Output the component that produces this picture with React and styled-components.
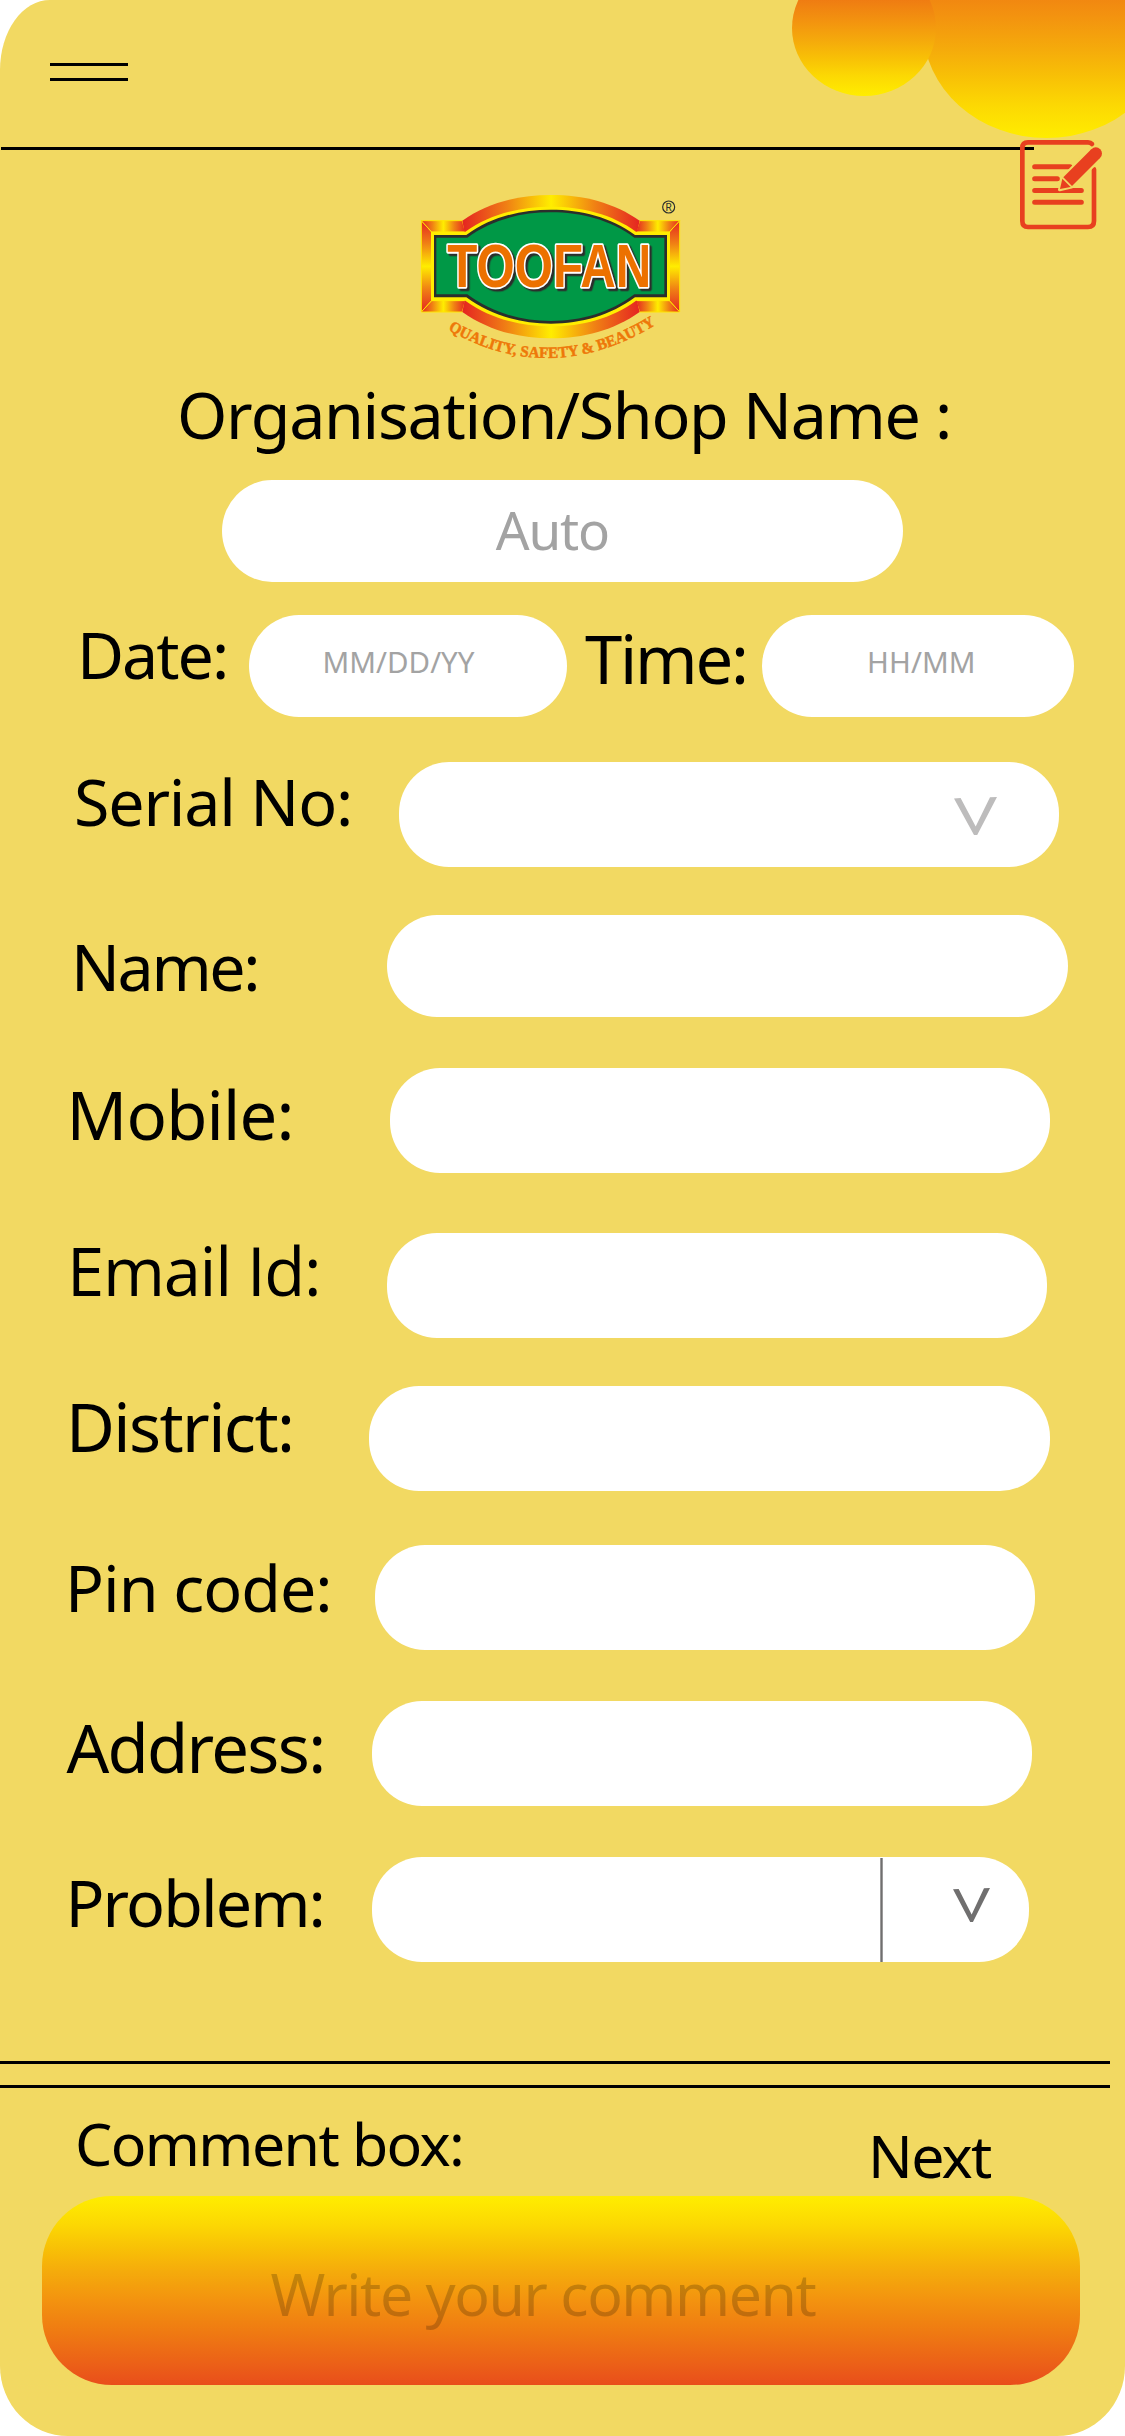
import React from "react";
import styled, { createGlobalStyle } from "styled-components";

const GlobalStyle = createGlobalStyle`
  body {
    margin: 0;
    background: #fff;
    font-family: "Noto Sans", "Open Sans", sans-serif;
    color: #000;
  }
`;

const ASCENT = 0.888;

const Screen = styled.main`
  position: relative;
  display: flex;
  flex-direction: column;
  width: 1125px;
  height: 2436px;
  overflow: hidden;
  background: #f2d962;
  border-radius: 50px 0 68px 68px / 70px 0 70px 70px;
`;

const Header = styled.header`
  display: flex;
  flex-direction: column;
  justify-content: space-between;
  height: 87px;
  padding: 63px 0 0 1px;
`;

const MenuButton = styled.button`
  display: flex;
  flex-direction: column;
  gap: 12px;
  width: 78px;
  margin: 0 0 0 48.5px;
  padding: 0;
  border: 0;
  background: none;
`;

const Rule = styled.span`
  display: block;
  width: ${(p) => p.$width || "100%"};
  height: 3px;
  background: #000;
`;

const Bubble = styled.div`
  position: absolute;
  top: ${(p) => p.$top}px;
  left: ${(p) => p.$left}px;
  width: ${(p) => p.$width}px;
  height: ${(p) => p.$height}px;
  border-radius: 50%;
  background: linear-gradient(
    to top,
    #ffed00 0%,
    #fcd803 15%,
    #f8c006 28%,
    #f5ab0b 40%,
    #f3930f 55%,
    #ef7a12 72%,
    #ec6317 87%,
    #e94e1b 100%
  );
`;

const NoteIcon = styled.svg`
  position: absolute;
  top: 140px;
  left: 1019.5px;
  width: 84px;
  height: 90px;
`;

const Logo = styled.svg`
  width: 300px;
  height: 200px;
  margin: 30px 0 0 400px;
  overflow: visible;
`;

const BrandName = styled.text`
  font: 700 182px "Liberation Sans", Arial, sans-serif;
  fill: #ec7100;
  stroke: #fff;
  stroke-width: 11px;
  stroke-linejoin: round;
  paint-order: stroke;
  filter: drop-shadow(7px 7px 0 #2b2e2c);
`;

const Label = styled.label`
  font-family: ${(p) => p.$family || "inherit"};
  font-size: ${(p) => p.$size}px;
  line-height: 1;
  letter-spacing: ${(p) => p.$track || 0}px;
  white-space: pre;
  padding-top: ${(p) => p.$base + 0.8 - ASCENT * p.$size}px;
`;

const Title = styled.h1`
  height: 100px;
  margin: 0;
  padding-left: 177px;
  box-sizing: border-box;
  font-size: 64.5px;
  font-weight: 400;
  line-height: 68px;
  letter-spacing: -1.3px;
  white-space: pre;
`;

const Row = styled.div`
  display: grid;
  grid-template-columns: ${(p) => p.$columns};
  align-items: start;
  height: ${(p) => p.$height || 105}px;
  margin-top: ${(p) => p.$gap}px;
  padding-left: ${(p) => p.$left}px;
`;

const Field = styled.div`
  display: flex;
  align-items: flex-start;
  box-sizing: border-box;
  height: ${(p) => p.$height || 105}px;
  padding-left: ${(p) => p.$inset || 0}px;
  border-radius: 50px / 51px;
  background: #fff;
`;

const ShopField = styled(Field)`
  flex: none;
  width: 681px;
  margin: 0 auto;
`;

const Placeholder = styled(Label)`
  color: #a3a3a3;
`;

const Arrow = styled.svg`
  flex: none;
  width: ${(p) => p.$width}px;
  height: ${(p) => p.$height}px;
  margin: ${(p) => p.$top}px 0 0 ${(p) => p.$left}px;
`;

const Separator = styled.span`
  width: 3px;
  height: 104px;
  margin: 1px 0 0 508px;
  background: linear-gradient(to right, #9b9a9a 0 1px, #706f6f 1px 2px, #9b9a9a 2px 3px);
`;

const Rules = styled.div`
  display: flex;
  flex-direction: column;
  gap: 21px;
  margin-top: 99px;
`;

const CommentHead = styled.div`
  display: flex;
  align-items: flex-start;
  height: 108px;
  padding-left: 75px;
`;

const NextLink = styled(Label).attrs({ as: "a" })`
  margin-left: auto;
  width: 257px;
`;

const CommentBox = styled.div`
  height: 189px;
  width: 1038px;
  margin-left: 42px;
  padding-left: 228.6px;
  box-sizing: border-box;
  display: flex;
  align-items: flex-start;
  border-radius: 70px;
  background: linear-gradient(
    to bottom,
    #ffed00 0%,
    #fcd803 15%,
    #f8c006 28%,
    #f5ab0b 40%,
    #f3930f 55%,
    #ef7a12 72%,
    #ec6317 87%,
    #e94e1b 100%
  );
`;

const CommentHint = styled(Label)`
  color: rgba(0, 0, 0, 0.2);
`;

const FIELDS = [
  { label: "Name:", left: 71, size: 64.5, track: -2.4, base: 75, gap: 48, x: 387, width: 681, height: 102 },
  { label: "Mobile:", left: 66.5, size: 67, track: -0.8, base: 72, gap: 51, x: 390, width: 660 },
  { label: "Email Id:", left: 67, size: 67, track: -1.3, base: 63, gap: 60, x: 387, width: 660, family: '"Open Sans", sans-serif' },
  { label: "District:", left: 66, size: 67, track: -1.6, base: 66, gap: 48, x: 369, width: 681 },
  { label: "Pin code:", left: 65, size: 64.5, track: -1, base: 66, gap: 54, x: 375, width: 660 },
  { label: "Address:", left: 66.5, size: 67, track: -1.7, base: 72, gap: 51, x: 372, width: 660 },
];

function FieldRow({ label, left, size, track, base, gap, x, width, height, family, children }) {
  return (
    <Row $left={left} $gap={gap} $height={height} $columns={`${x - left}px ${width}px`}>
      <Label $size={size} $track={track} $base={base} $family={family}>{label}</Label>
      <Field $height={height}>{children}</Field>
    </Row>
  );
}

function Chevron({ color, width, height, top, left }) {
  return (
    <Arrow $width={width} $height={height} $top={top} $left={left} viewBox="0 0 43 38" preserveAspectRatio="none">
      <polygon fill={color} points="0,1.5 6.6,1 21.7,29.5 36,0.3 43,0 23.2,38 20,38" />
    </Arrow>
  );
}

function ToofanLogo() {
  return (
    <Logo viewBox="0 0 900 600" role="img" aria-label="Toofan">
      <defs>
        <linearGradient id="band">
          <stop offset="0" stopColor="#e52421" />
          <stop offset="0.25" stopColor="#f08014" />
          <stop offset="0.5" stopColor="#ffed00" />
          <stop offset="0.75" stopColor="#f08014" />
          <stop offset="1" stopColor="#e52421" />
        </linearGradient>
        <linearGradient id="side" x2="0" y2="1">
          <stop offset="0" stopColor="#e52421" />
          <stop offset="0.25" stopColor="#f08014" />
          <stop offset="0.5" stopColor="#ffed00" />
          <stop offset="0.75" stopColor="#f08014" />
          <stop offset="1" stopColor="#e52421" />
        </linearGradient>
        <path id="tagline" d="M144,449 Q450,625 764,436" />
      </defs>
      <g stroke="#ffe500" strokeWidth="3">
        <polygon fill="url(#side)" points="64,122 95,156 95,362 64,396" />
        <polygon fill="url(#side)" points="839,122 808,156 808,362 839,396" />
        <polygon fill="url(#band)" points="64,122 187,122 196,156 95,156" />
        <polygon fill="url(#band)" points="839,122 719,122 708,156 808,156" />
        <polygon fill="url(#band)" points="64,396 187,396 196,362 95,362" />
        <polygon fill="url(#band)" points="839,396 719,396 708,362 808,362" />
      </g>
      <path fill="url(#band)" d="M187,122 C265,68 355,45 453,45 C551,45 641,68 719,122 L708,170 L196,170Z" />
      <path fill="url(#band)" d="M187,396 C265,451 355,475 453,475 C551,475 641,451 719,396 L708,350 L196,350Z" />
      <path fill="#ffed00" d="M93,155 H196 C270,102 360,80 453,80 C546,80 636,102 708,155 H810 V362 H708 C636,415 546,439 453,439 C360,439 270,415 196,362 H93Z" />
      <path fill="#2b2e2c" d="M102,165 H199 C272,111 362,89 453,89 C544,89 632,111 705,165 H801 V352 H705 C632,406 544,431 453,431 C362,431 272,406 199,352 H102Z" />
      <path fill="#009846" d="M109,173 H202 C275,119 363,97 453,97 C543,97 630,119 703,173 H793 V343 H703 C630,398 543,423 453,423 C363,423 275,398 202,343 H109Z" />
      <BrandName x="142" y="321" textLength="612" lengthAdjust="spacingAndGlyphs">TOOFAN</BrandName>
      <text fontFamily='"Liberation Serif", "Times New Roman", serif' fontWeight="700" fontSize="47" fill="#ee7809" stroke="#ee7809" strokeWidth="1.5">
        <textPath href="#tagline" textLength="658" lengthAdjust="spacingAndGlyphs">QUALITY, SAFETY &amp; BEAUTY</textPath>
      </text>
      <circle cx="806" cy="81" r="18" fill="none" stroke="#2b2e2c" strokeWidth="3.5" />
      <text x="806" y="92" textAnchor="middle" fontFamily="Roboto, sans-serif" fontSize="30" fill="#2b2e2c">R</text>
    </Logo>
  );
}

export default function App() {
  return (
    <>
      <GlobalStyle />
      <Screen>
        <Header>
          <MenuButton aria-label="Menu">
            <Rule />
            <Rule />
          </MenuButton>
          <Rule $width="1032.5px" />
        </Header>
        <Bubble $left={923} $top={-83} $width={247} $height={221} />
        <Bubble $left={792} $top={-40} $width={144} $height={136} />
        <NoteIcon viewBox="0 0 252 270" fill="none" stroke="#e8401f" strokeLinecap="round">
          <path strokeWidth="14" d="M216,12 Q212,7 204,7 H24 Q7,7 7,24 V243 Q7,261 24,261 H204 Q222,261 222,243 V88" />
          <path strokeWidth="15" d="M44,80 H150 M44,116 H112 M44,151.500 H184 M44,187 H184" />
          <path stroke="#f2d962" strokeLinecap="butt" strokeLinejoin="round" strokeWidth="10" fill="#f2d962" d="M128,113 L211,28 L243,54 L154,141 L119,149Z" />
          <path strokeWidth="37" strokeLinecap="butt" d="M143,125 L227,41" />
          <circle cx="227.500" cy="40.500" r="18.500" fill="#e8401f" stroke="none" />
          <path fill="#e8401f" stroke="none" d="M127,116 L152,141 L120,147Z" />
        </NoteIcon>

        <ToofanLogo />
        <Title>Organisation/Shop Name :</Title>
        <ShopField $height={102} $inset={273.8}>
          <Placeholder $size={53} $track={-1.2} $base={69}>Auto</Placeholder>
        </ShopField>

        <Row $left={77} $gap={33} $height={102} $columns="172px 318px 18px 177px 312px">
          <Label $size={64.5} $track={-2} $base={63}>Date:</Label>
          <Field $height={102} $inset={73.6}>
            <Placeholder $size={29.5} $base={57}>MM/DD/YY</Placeholder>
          </Field>
          <span />
          <Label $size={67} $track={-2.25} $base={69}>Time:</Label>
          <Field $height={102} $inset={105}>
            <Placeholder $size={29.5} $track={0.1} $base={57}>HH/MM</Placeholder>
          </Field>
        </Row>

        <FieldRow label="Serial No:" left={74} size={64.5} track={-1.19} base={63} gap={45} x={399} width={660}>
          <Chevron color="#bdbcbc" width={43} height={38} top={35} left={555} />
        </FieldRow>
        {FIELDS.map((f) => (
          <FieldRow key={f.label} {...f} />
        ))}
        <FieldRow label="Problem:" left={65.5} size={64.5} track={-1.9} base={69} gap={51} x={372} width={657}>
          <Separator />
          <Chevron color="#706f6f" width={37} height={34} top={31} left={70} />
        </FieldRow>

        <Rules>
          <Rule $width="1110px" />
          <Rule $width="1110px" />
        </Rules>
        <CommentHead>
          <Label $size={59} $track={-1.6} $base={78}>Comment box:</Label>
          <NextLink $size={59} $track={-1.7} $base={90}>Next</NextLink>
        </CommentHead>
        <CommentBox>
          <CommentHint $size={59} $track={-1.46} $base={120}>Write your comment</CommentHint>
        </CommentBox>
      </Screen>
    </>
  );
}
